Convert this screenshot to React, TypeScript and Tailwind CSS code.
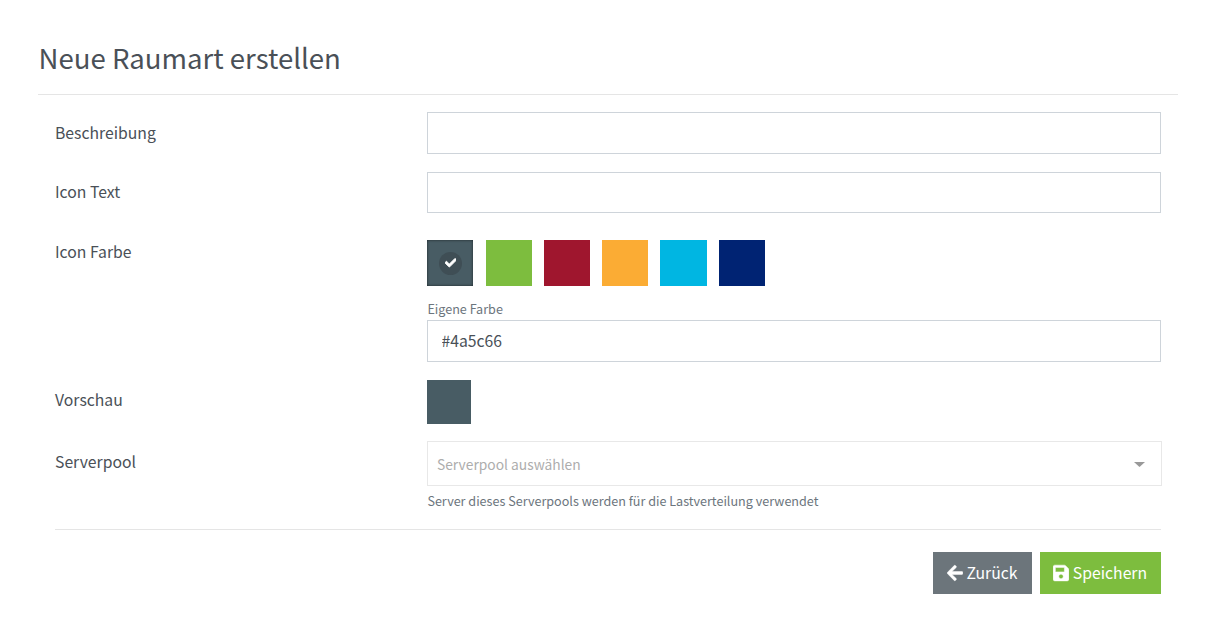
import type { ReactNode } from "react";
import { FaArrowLeft, FaCheck, FaSave } from "react-icons/fa";

const colors = [
  { hex: "#4a5c66", cls: "bg-[#485c64]" },
  { hex: "#7dbd3e", cls: "bg-[#7dbd3e]" },
  { hex: "#9f162e", cls: "bg-[#9f162e]" },
  { hex: "#fbac34", cls: "bg-[#fbac34]" },
  { hex: "#00b6e2", cls: "bg-[#00b6e2]" },
  { hex: "#002373", cls: "bg-[#002373]" },
];

function Row({ label, className, labelClass = "pt-2", children }: { label: string; className: string; labelClass?: string; children: ReactNode }) {
  return (
    <div className={`flex ${className}`}>
      <div className={`w-[372px] shrink-0 leading-[26px] ${labelClass}`}>{label}</div>
      <div className="min-w-0 flex-1">{children}</div>
    </div>
  );
}

function TextInput({ value = "", className }: { value?: string; className: string }) {
  return (
    <input
      type="text"
      defaultValue={value}
      className={`block w-full border border-[#ced4da] bg-white px-[13.5px] pb-0.5 text-[#495057] outline-none ${className}`}
    />
  );
}

export default function App() {
  return (
    <div className="h-[637px] w-[1218px] overflow-hidden bg-white pl-[38px] pr-[39px] pt-[37px] font-['Noto_Sans_CJK_SC',sans-serif] text-[15.75px] text-[#4a5057]">
      <h2 className="h-[57px] pl-[0.6px] text-[27.55px] leading-10">Neue Raumart erstellen</h2>
      <hr className="mr-px border-[#e5e5e5]" />
      <form className="pl-[17px] pr-[18px] pt-[17px]">
        <Row label="Beschreibung" className="h-[60px]">
          <TextInput className="h-[42px]" />
        </Row>
        <Row label="Icon Text" className="h-[59px]" labelClass="pt-[7px]">
          <TextInput className="h-[41px]" />
        </Row>
        <Row label="Icon Farbe" className="h-[149px]">
          <div className="flex gap-[12.07px] pl-[0.22px] pt-[9px]">
            {colors.map((c, i) => (
              <button key={c.hex} type="button" className={`flex h-[46px] w-[46.25px] items-center justify-center ${c.cls} ${i === 0 ? "shadow-[inset_0_0_3px_0_rgba(0,0,0,0.6)]" : ""}`}>
                {i === 0 && (
                  <span className="flex size-[23px] items-center justify-center rounded-full bg-[#3f4e55]">
                    <FaCheck className="-mt-px size-[11.5px] stroke-[36] text-white" />
                  </span>
                )}
              </button>
            ))}
          </div>
          <div className="mt-3 h-[22px] pl-[0.4px] text-[12.6px] leading-[21px] text-[#6c757d]">Eigene Farbe</div>
          <TextInput value="#4a5c66" className="h-[42px]" />
        </Row>
        <Row label="Vorschau" className="h-[61px]" labelClass="pt-[7px]">
          <div className="size-11 bg-[#485c64]" />
        </Row>
        <Row label="Serverpool" className="h-[88px]">
          <div className="-mr-px flex h-[45px] items-center justify-between border border-[#e8e8e8] pl-[9px] pr-4 text-[13.8px] text-[#adadad]">
            <span className="pt-0.5">Serverpool auswählen</span>
            <svg viewBox="0 0 11 5" className="mt-0.5 h-[5px] w-[11px] fill-[#999999]">
              <path d="M0 0h11L5.5 5z" />
            </svg>
          </div>
          <div className="mt-1 pl-[0.4px] text-[12.6px] leading-[21px] text-[#6c757d]">
            Server dieses Serverpools werden für die Lastverteilung verwendet
          </div>
        </Row>
        <hr className="border-[#e5e5e5]" />
        <div className="mt-[22px] flex justify-end gap-2 text-white">
          <button type="button" className="flex h-[42px] w-[99px] items-center justify-center gap-[3.5px] bg-[#6c757b]">
            <FaArrowLeft className="-ml-[0.6px] -mt-px h-[18px] w-4 stroke-[14]" />
            <span>Zurück</span>
          </button>
          <button type="submit" className="flex h-[42px] w-[121px] items-center justify-center gap-[3.5px] bg-[#7dbd3e]">
            <FaSave className="-ml-[0.6px] -mt-px h-[18px] w-4 stroke-[14]" />
            <span>Speichern</span>
          </button>
        </div>
      </form>
    </div>
  );
}
